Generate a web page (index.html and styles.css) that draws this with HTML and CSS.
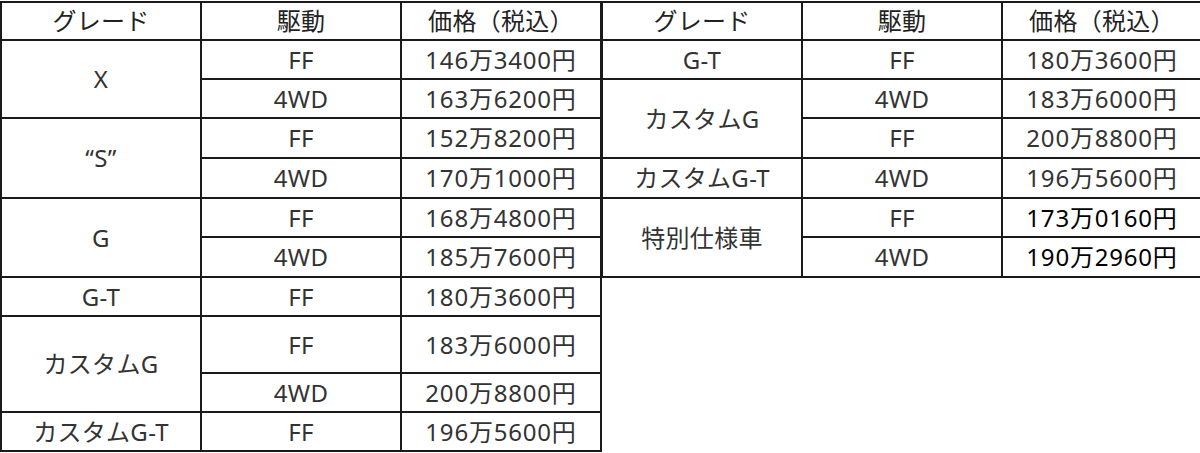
FILE: index.html
```html
<!DOCTYPE html>
<html lang="ja">
<head>
<meta charset="utf-8">
<link rel="stylesheet" href="styles.css">
</head>
<body>
<div class="wrap">
  <table class="price">
    <colgroup><col class="c"><col class="c"><col class="c"></colgroup>
    <tr class="head"><td>グレード</td><td>駆動</td><td>価格（税込）</td></tr>
    <tr><td rowspan="2">X</td><td>FF</td><td class="yen">146万3400円</td></tr>
    <tr><td>4WD</td><td class="yen">163万6200円</td></tr>
    <tr class="r40"><td rowspan="2">“S”</td><td>FF</td><td class="yen">152万8200円</td></tr>
    <tr class="r40"><td>4WD</td><td class="yen">170万1000円</td></tr>
    <tr><td rowspan="2">G</td><td>FF</td><td class="yen">168万4800円</td></tr>
    <tr class="r40"><td>4WD</td><td class="yen">185万7600円</td></tr>
    <tr><td>G-T</td><td>FF</td><td class="yen">180万3600円</td></tr>
    <tr class="tall"><td rowspan="2">カスタムG</td><td>FF</td><td class="yen">183万6000円</td></tr>
    <tr><td>4WD</td><td class="yen">200万8800円</td></tr>
    <tr><td>カスタムG-T</td><td>FF</td><td class="yen">196万5600円</td></tr>
  </table>
  <table class="price right">
    <colgroup><col class="c"><col class="c"><col class="c"></colgroup>
    <tr class="head"><td>グレード</td><td>駆動</td><td>価格（税込）</td></tr>
    <tr><td>G-T</td><td>FF</td><td class="yen">180万3600円</td></tr>
    <tr><td rowspan="2">カスタムG</td><td>4WD</td><td class="yen">183万6000円</td></tr>
    <tr class="r40"><td>FF</td><td class="yen">200万8800円</td></tr>
    <tr class="r40"><td>カスタムG-T</td><td>4WD</td><td class="yen">196万5600円</td></tr>
    <tr><td rowspan="2">特別仕様車</td><td>FF</td><td class="yen black">173万0160円</td></tr>
    <tr class="r40"><td>4WD</td><td class="yen black">190万2960円</td></tr>
  </table>
</div>
</body>
</html>
```
FILE: styles.css
```css
html, body {
  margin: 0;
  padding: 0;
  background: #fff;
}
.wrap {
  display: flex;
  align-items: flex-start;
  padding: 1px 0 0 0;
}
.price {
  border-collapse: collapse;
  table-layout: fixed;
  width: 600px;
  font-family: "Noto Sans", "Noto Sans CJK JP", sans-serif;
  font-size: 24px;
  color: #333;
}
.price.right {
  margin-left: -1px;
}
.price .c { width: 200px; }
.price td {
  border: 2px solid #1a1a1a;
  text-align: center;
  vertical-align: middle;
  padding: 0;
  line-height: 1;
  height: 37px;
  letter-spacing: 0.3px;
}
.price td.yen { letter-spacing: 0.8px; }
.price .head td { height: 36px; color: #222; }
.price .r40 td { height: 38px; }
.price .tall td { height: 55px; }
.price td.black { color: #000; }
```
